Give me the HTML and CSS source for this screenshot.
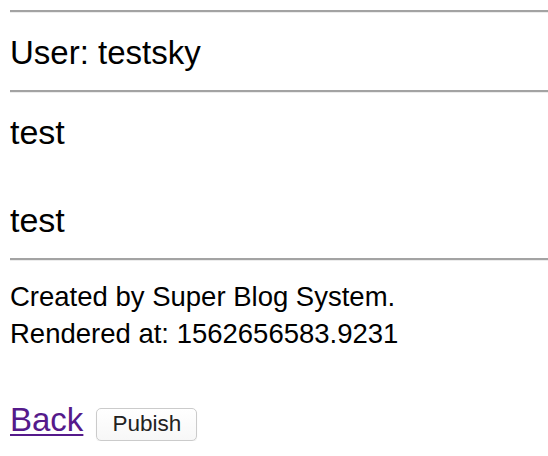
FILE: index.html
```html
<!DOCTYPE html>
<html>
<head>
<meta charset="utf-8">
<link rel="stylesheet" href="styles.css">
</head>
<body>
<hr class="rule rule-top">
<div class="user">User: testsky</div>
<hr class="rule rule-mid">
<div class="post">
  <div class="title">test</div>
  <div class="content">test</div>
</div>
<hr class="rule rule-bottom">
<div class="footer">
  <div>Created by Super Blog System.</div>
  <div>Rendered at: 1562656583.9231</div>
</div>
<div class="actions">
  <a class="back" href="#">Back</a>
  <button class="publish" type="button">Pubish</button>
</div>
</body>
</html>
```

FILE: styles.css
```css
html, body {
  margin: 0;
  padding: 0;
  background: #fff;
}
body {
  padding-left: 10px;
  font-family: "Liberation Sans", Arial, sans-serif;
  color: #000;
  overflow: hidden;
}
.rule {
  margin: 0;
  height: 0;
  border: 0;
  border-top: 2px solid #a3a3a3;
  border-bottom: 1px solid #ececec;
}
.rule-top { margin-top: 10px; }
.user {
  font-size: 33px;
  line-height: 40px;
  margin-top: 20px;
  margin-bottom: 17px;
}
.post {
  padding-top: 19px;
}
.title, .content {
  font-size: 34px;
  line-height: 40px;
}
.content { margin-top: 48px; }
.rule-bottom { margin-top: 18px; }
.footer {
  margin-top: 17px;
  font-size: 27.5px;
  line-height: 37px;
}
.actions {
  margin-top: 48px;
  display: flex;
  align-items: baseline;
  gap: 13px;
}
.back {
  font-size: 33px;
  line-height: 40px;
  color: #551a8b;
  text-decoration-thickness: 2px;
  text-underline-offset: 3px;
}
.publish {
  font-family: "Liberation Sans", Arial, sans-serif;
  font-size: 22.5px;
  color: #222;
  height: 33px;
  padding: 0 15px;
  border: 1px solid #cbcbcb;
  border-radius: 5px;
  background: linear-gradient(#ffffff, #f7f7f7);
  box-shadow: 0 1px 1px rgba(0,0,0,0.08);
}
```
